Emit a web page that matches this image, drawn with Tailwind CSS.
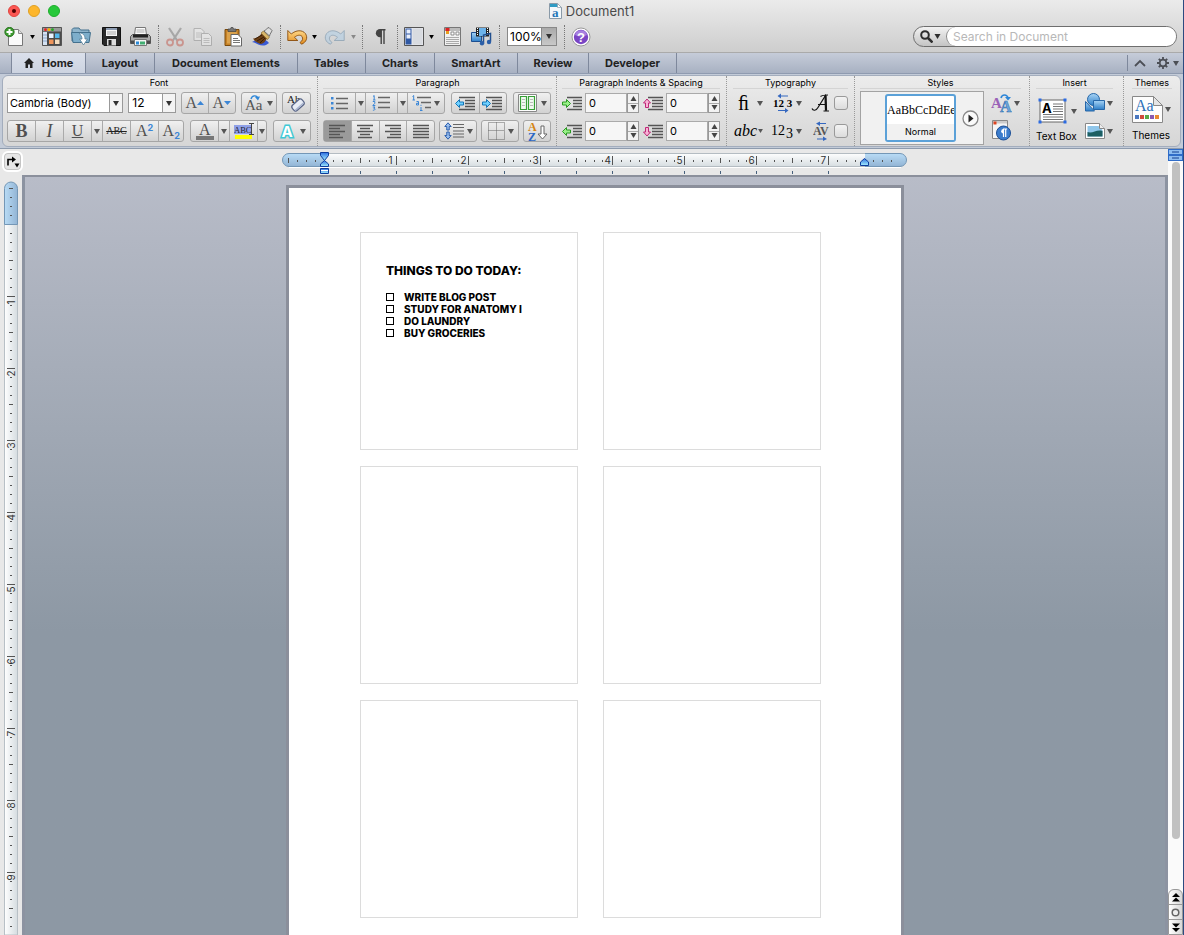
<!DOCTYPE html>
<html lang="en">
<head>
<meta charset="utf-8">
<title>Document1</title>
<script src="https://cdn.jsdelivr.net/npm/@tailwindcss/browser@4"></script>
</head>
<body class="flex h-screen flex-col overflow-hidden border-r border-[#2c4a80] bg-[#e8e8e8] font-[Inter,'Liberation_Sans',sans-serif] text-[11px] text-black">
<svg class="absolute size-0" aria-hidden="true">
  <symbol id="caret" viewBox="0 0 6 5"><path d="M0 0h6L3 5z"/></symbol>
  <linearGradient id="gold" x2="0" y2="1"><stop stop-color="#ffd98a"/><stop offset="1" stop-color="#e08a1c"/></linearGradient>
  <linearGradient id="blue" x2="0" y2="1"><stop stop-color="#a8d4f5"/><stop offset="1" stop-color="#2f7fc8"/></linearGradient>
</svg>

<header class="bg-linear-to-b from-[#ebebeb] to-[#cdcdcd]">
  <div class="relative flex h-[21px] items-center justify-center gap-1">
    <div class="absolute left-2 flex gap-2">
      <button aria-label="Close" class="flex size-3 items-center justify-center rounded-full border border-[#e0443e] bg-[#fc5753]"><span class="size-1 rounded-full bg-[#4d0000]"></span></button>
      <button aria-label="Minimize" class="size-3 rounded-full border border-[#dfa023] bg-[#fdb62c]"></button>
      <button aria-label="Zoom" class="size-3 rounded-full border border-[#1dad2b] bg-[#27c83a]"></button>
    </div>
    <svg width="13" height="16" viewBox="0 0 13 16"><path d="M.5.500h8l4 4v11H.5z" fill="#f4f8fb" stroke="#8a9aa8"/><path d="M1 1h7.500l3 3H1z" fill="#2f9bc4"/><path d="M8.500.5v4h4z" fill="#fff" stroke="#8a9aa8" stroke-width=".7"/><text x="3" y="13.500" font-family="Liberation Serif,serif" font-weight="bold" font-size="13" fill="#2476b8">a</text></svg>
    <h1 class="text-[13px] leading-5 text-[#4a4a4a]">Document1</h1>
  </div>

  <div class="flex h-8 items-center border-b border-[#aaa] pr-1.5 pl-0.5">
    <button aria-label="New" class="flex w-6 justify-center"><svg width="20" height="20" viewBox="0 0 20 20"><path d="M4.500 2.500h10l4 4v12h-14z" fill="#fafafa" stroke="#777"/><path d="M14.500 2.500v4h4" fill="#ddd" stroke="#888"/><circle cx="5.500" cy="5" r="4.700" fill="#3c9a2e" stroke="#1f6a16" stroke-width=".8"/><path d="M5.500 2v6M2.500 5h6" stroke="#fff" stroke-width="2"/></svg></button>
    <button aria-label="New options" class="flex w-3 justify-center"><svg width="5" height="4"><use href="#caret"/></svg></button>
    <button aria-label="Template gallery" class="flex w-7 justify-center"><svg width="20" height="19" viewBox="0 0 20 19"><path d="M.5.500h19v18H.5z" fill="#4a4a4a" stroke="#555"/><path d="M1 5h4v13H1z" fill="#d5e2f2"/><path d="M1 8h4M1 11h4M1 14h4" stroke="#8fa9cc"/><path d="M1 1h18v3.500H1z" fill="#999"/><circle cx="3.500" cy="2.700" r="1.400" fill="#e22"/><circle cx="7" cy="2.700" r="1.400" fill="#f4b400"/><circle cx="10.500" cy="2.700" r="1.400" fill="#2a2"/><path d="M7 6.500h4.500v4.500H7z" fill="#e9f3ff"/><path d="M13 6.500h4.500v4.500H13z" fill="#55b7ec"/><path d="M7 12.500h4.500V17H7z" fill="#f0955a"/><path d="M13 12.500h4.500V17H13z" fill="#f4ddc0"/></svg></button>
    <button aria-label="Open" class="flex w-7.5 justify-center"><svg width="20" height="19" viewBox="0 0 20 19"><path d="M1 14V2.500L2.500 1H8l1.500 2H18v11z" fill="#8fb4cb" stroke="#44718e"/><path d="M.5 5.500h19L18 15.500H2z" fill="#7eaecb" stroke="#44718e"/><path d="M8 6c4 0 6 2 6 6h2.500L12.500 18 8.500 12H11c0-2-1-4-3-6z" fill="#fff" stroke="#557d97" stroke-width=".8"/></svg></button>
    <button aria-label="Save" class="flex w-7.5 justify-center"><svg width="19" height="19" viewBox="0 0 19 19"><path d="M.5.500h18v18H2l-1.500-1.500z" fill="#292929" stroke="#111"/><path d="M4 1h11v8H4z" fill="#f6f6f6"/><path d="M4 1h11v2H4z" fill="#8d9cb2"/><path d="M5 5h9M5 7h9" stroke="#aaa"/><path d="M5 12h9v6.500H5z" fill="#ddd"/><path d="M6.500 13h3v5h-3z" fill="#222"/></svg></button>
    <button aria-label="Print" class="flex w-7 justify-center"><svg width="21" height="19" viewBox="0 0 21 19"><path d="M4.500 8l1-7.500h10l1 7.500z" fill="#fafafa" stroke="#777"/><path d="M6.500 3h8M6.500 5h8" stroke="#aaa"/><path d="M.5 9.500l2-2h16l2 2v7h-20z" fill="#aaa" stroke="#555"/><path d="M3 7.500h15v3H3z" fill="#222"/><path d="M1 13.500h19v3H1z" fill="#4b4b4b"/><path d="M4.500 12.500h12v6h-12z" fill="#f4f4f4" stroke="#777"/><path d="M6 14.500h3v3H6z" fill="#2b8bd8"/><path d="M10 14.500h5v3h-5z" fill="#41ae72"/></svg></button>
    <span class="flex w-2 justify-center"><i class="h-6 border-l border-dotted border-[#777]"></i></span>
    <button aria-label="Cut" class="flex w-6.5 justify-center opacity-50"><svg width="18" height="20" viewBox="0 0 18 20"><path d="M3 1l8.500 13M15 1L6.500 14" stroke="#777" stroke-width="2.200"/><circle cx="4" cy="15.500" r="3" fill="none" stroke="#c2584c" stroke-width="1.800"/><circle cx="14" cy="15.500" r="3" fill="none" stroke="#c2584c" stroke-width="1.800"/></svg></button>
    <button aria-label="Copy" class="flex w-7.5 justify-center opacity-40"><svg width="20" height="20" viewBox="0 0 20 20"><path d="M1 1.500h7l3 3v9H1z" fill="#f3f3f3" stroke="#777"/><path d="M3 6h6M3 8h6M3 10h6" stroke="#999"/><path d="M8.500 6.500h7l3 3v9h-10z" fill="#f5f5f5" stroke="#777"/><path d="M10.500 11.500h6M10.500 13.500h6M10.500 15.500h6" stroke="#999"/></svg></button>
    <button aria-label="Paste" class="flex w-7.5 justify-center"><svg width="19" height="20" viewBox="0 0 19 20"><path d="M1 2.500h14v16H1z" fill="#c78226" stroke="#7a4a0d"/><path d="M3 4.500h10v12H3z" fill="#dba24c"/><path d="M4 4.500V2h2.500l.5-1.500h2L9.500 2H12v2.500z" fill="#777" stroke="#444" stroke-width=".7"/><path d="M7 7.500h7l3.500 3.500v8H7z" fill="#fff" stroke="#666"/><path d="M9 11.500h5M9 13.500h7M9 15.500h7" stroke="#777"/></svg></button>
    <button aria-label="Format painter" class="flex w-7 justify-center"><svg width="22" height="20" viewBox="0 0 22 20"><path d="M1 15c5 1 8 5 14 3l3-2c-2-3-5-3-7-6z" fill="#3a5bd6"/><path d="M2 11.500C6 12 9 8 11 6.500l5 5c-2 3-3 5-6 5.500-3-1-6-2-8-5.500z" fill="#6b3e14"/><path d="M4 12l7-4M6 14l7-4M9 16l5-5" stroke="#3a1e06"/><path d="M10 6l2.500-2 6 6-2 2.500z" fill="#d9b66a" stroke="#7c5a1c" stroke-width=".6"/><path d="M13 4c2-1 3-3 5-3.500l3 3c-.5 2-2 3-2.500 5.500z" fill="#ddd" stroke="#555" stroke-width=".8"/></svg></button>
    <span class="flex w-2 justify-center"><i class="h-6 border-l border-dotted border-[#777]"></i></span>
    <button aria-label="Undo" class="flex w-6.5 justify-center"><svg width="21" height="16" viewBox="0 0 21 16"><path d="M.8 1.500v10h10L7.500 8.300c2.500-2.300 6-2.800 7.500-.8 1.300 2 .5 4.500-2 6l1.500 1.700c5-2 6.500-6.500 4-10.500-3.200-4.200-9.500-3.700-14.200.3z" fill="url(#gold)" stroke="#8a4d0c" stroke-width=".9"/></svg></button>
    <button aria-label="Undo options" class="flex w-2 justify-center"><svg width="5" height="4"><use href="#caret"/></svg></button>
    <button aria-label="Redo" class="flex w-8 justify-center opacity-45"><svg width="21" height="16" viewBox="0 0 21 16"><path d="M20.200 1.500v10h-10l3.300-3.200C11 6 7.500 5.500 6 7.500c-1.300 2-.5 4.500 2 6l-1.500 1.700c-5-2-6.500-6.500-4-10.500C5.700.5 12 1 16.700 5z" fill="#a8cdea" stroke="#4a7294" stroke-width=".9"/></svg></button>
    <button aria-label="Redo options" class="flex w-1.5 justify-center"><svg width="5" height="4" fill="#888"><use href="#caret"/></svg></button>
    <span class="flex w-3 justify-center"><i class="h-6 border-l border-dotted border-[#777]"></i></span>
    <button aria-label="Show formatting" class="flex w-6 justify-center"><svg width="11" height="15" viewBox="0 0 11 15"><path d="M10.500.8H5M6.200.5V15M9 .5V15" stroke="#444" stroke-width="1.400"/><path d="M6.500 0H5a4 4 0 000 8.300h1.500z" fill="#444"/></svg></button>
    <span class="flex w-2.5 justify-center"><i class="h-6 border-l border-dotted border-[#777]"></i></span>
    <button aria-label="Sidebar" class="flex w-6 justify-center"><svg width="20" height="19" viewBox="0 0 20 19"><path d="M.5.500h19v18H.5z" fill="#e9ebef" stroke="#555"/><path d="M1.500 1.500h6v16h-6z" fill="#3059a4"/><path d="M2.500 2.500h4v4h-4zM2.500 7.500h4v4h-4z" fill="#e7eefb"/><path d="M8.500 1.500h10v16h-10z" fill="#d8dbe0"/></svg></button>
    <button aria-label="Sidebar options" class="flex w-2.5 justify-center"><svg width="5" height="4"><use href="#caret"/></svg></button>
    <button aria-label="Toolbox" class="flex w-8 justify-center"><svg width="17" height="19" viewBox="0 0 17 19"><path d="M.5.500h16v18H.5z" fill="#f1f1f1" stroke="#777"/><path d="M1 1h15v3H1z" fill="#bbb"/><path d="M1.500 1h4v3h-4z" fill="#d22"/><path d="M2 4h3v3H2z" fill="#e8a020"/><path d="M7 5h3v3H7zM12 5h3v3h-3z" fill="#fff" stroke="#777" stroke-width=".8"/><path d="M2 10.500h13M2 12.500h13M2 14.500h13M2 16.500h13" stroke="#aaa"/></svg></button>
    <button aria-label="Media browser" class="flex w-6.5 justify-center"><svg width="21" height="19" viewBox="0 0 21 19"><path d="M.5 5.500h10v9H.5z" fill="url(#blue)" stroke="#1d4f91"/><path d="M5 .5h13v9H5z" fill="#222"/><path d="M8 1h7v8H8z" fill="#6db3ea"/><path d="M6.500 1v8M16.500 1v8" stroke="#fff" stroke-dasharray="1 1"/><path d="M12.500 16V8l7-1.500v8" fill="none" stroke="#224f8e" stroke-width="1.500"/><circle cx="11" cy="16.200" r="2.200" fill="#2a5ea8"/><circle cx="18" cy="15" r="2.200" fill="#2a5ea8"/></svg></button>
    <span class="flex w-2.5 justify-center"><i class="h-6 border-l border-dotted border-[#777]"></i></span>
    <div class="relative mx-[3px] h-[19px] w-[50px]">
      <select aria-label="Zoom level" class="h-full w-full appearance-none border border-[#888] bg-white pl-0.5 text-xs leading-none"><option>100%</option></select>
      <span class="pointer-events-none absolute inset-y-0 right-0 flex w-4 items-center justify-center border border-[#888] bg-linear-to-b from-[#aaa] to-[#c8c8c8]"><svg width="6" height="5" fill="#333"><use href="#caret"/></svg></span>
    </div>
    <span class="flex w-2 justify-center"><i class="h-6 border-l border-dotted border-[#777]"></i></span>
    <button aria-label="Help" class="ml-px flex w-6 justify-center"><svg width="20" height="20" viewBox="0 0 20 20"><circle cx="10" cy="10" r="9" fill="#fff" stroke="#999"/><circle cx="10" cy="10" r="7.200" fill="#7a45c4"/><path d="M4 8a6.200 6.200 0 0112 0c-4 2-8 2-12 0z" fill="#a880e0"/><text x="10" y="14.500" text-anchor="middle" font-family="Liberation Sans,sans-serif" font-weight="bold" font-size="13" fill="#fff">?</text></svg></button>
    <div class="ml-auto flex h-[21px] w-66 rounded-full border border-[#6e6e6e] bg-linear-to-b from-[#f2f2f2] to-[#c4c4c4]">
      <button aria-label="Search options" class="flex w-8 items-center justify-center gap-px"><svg width="13" height="13" viewBox="0 0 13 13" fill="none" stroke="#2d2d2d"><circle cx="5" cy="5" r="3.800" stroke-width="2"/><path d="M8 8l4.500 4.500" stroke-width="2.500"/></svg><svg width="7" height="5" fill="#2d2d2d"><use href="#caret"/></svg></button>
      <input aria-label="Search in Document" placeholder="Search in Document" class="min-w-0 flex-1 rounded-full border-l border-[#888] bg-white pl-1.5 text-xs outline-none placeholder:text-[#b8b8b8]">
    </div>
  </div>
</header>

<nav class="flex h-[21px] border-b border-[#8f9bb0] bg-linear-to-b from-[#c6ccd9] to-[#a8b1c2] pl-px text-[11px] font-bold text-[#222]">
  <span class="w-[11px] border-r border-[#7e889c]"></span>
  <button class="flex w-[74px] items-center justify-center gap-2 border-r border-[#7e889c] bg-linear-to-b from-[#dbe0eb] to-[#ccd3e0]"><svg width="10" height="10" viewBox="0 0 10 10"><path d="M5 0L0 5h1.500v5H4V6.500h2V10h2.500V5H10z" fill="#222"/></svg>Home</button>
  <button class="w-[69px] border-r border-[#7e889c]">Layout</button>
  <button class="w-[143px] border-r border-[#7e889c]">Document Elements</button>
  <button class="w-[68px] border-r border-[#7e889c]">Tables</button>
  <button class="w-[69px] border-r border-[#7e889c]">Charts</button>
  <button class="w-[83px] border-r border-[#7e889c]">SmartArt</button>
  <button class="w-[71px] border-r border-[#7e889c]">Review</button>
  <button class="w-[88px] border-r border-[#7e889c]">Developer</button>
  <div class="my-0.5 ml-auto flex items-center gap-2 border-l border-[#7e889c] pr-1 pl-1.5">
    <button aria-label="Collapse ribbon"><svg width="12" height="8" viewBox="0 0 12 8"><path d="M1 7l5-5 5 5" fill="none" stroke="#4c4f56" stroke-width="1.800"/></svg></button>
    <button aria-label="Ribbon settings" class="ml-0.5 flex items-center gap-[3px]"><svg width="14" height="14" viewBox="0 0 14 14" fill="none" stroke="#4c4f56"><circle cx="7" cy="7" r="3.300" stroke-width="1.700"/><path d="M7 1v2.500M7 10.500V13M1 7h2.500M10.500 7H13M2.800 2.800l1.700 1.700M9.500 9.500l1.700 1.700M2.800 11.200l1.700-1.700M9.500 4.500l1.700-1.700" stroke-width="1.800"/></svg><svg width="6" height="5" fill="#4c4f56"><use href="#caret"/></svg></button>
  </div>
</nav>

<section aria-label="Ribbon" class="border-b border-[#8e9bad] bg-[#c3cbd8] px-0.5 pt-px pb-px">
 <div class="grid h-18 grid-cols-[315px_239px_170px_128px_175px_94px_1fr] rounded-md border border-[#a3adbd] bg-linear-to-b from-[#ececec] to-[#d6d6d6]">
  <!-- Font -->
  <div class="border-r border-dotted border-[#999] pr-1.5 pl-1">
    <h2 class="mb-[3px] h-[13px] border-b border-[#d4d4d4] text-center text-[9px] leading-[13px]">Font</h2>
    <div class="flex flex-col gap-1.5">
      <div class="flex h-[22px] items-center gap-[5px]">
        <div class="relative h-5 w-[118px]">
          <select aria-label="Font name" class="h-full w-full appearance-none border border-[#999] bg-white pl-0.5 text-[11px]"><option>Cambria (Body)</option></select>
          <span class="pointer-events-none absolute inset-y-0 right-0 flex w-3.5 items-center justify-center border border-[#999] bg-[#f3f3f3]"><svg width="6" height="5" fill="#333"><use href="#caret"/></svg></span>
        </div>
        <div class="relative h-5 w-12">
          <select aria-label="Font size" class="h-full w-full appearance-none border border-[#999] bg-white pl-[3px] text-xs"><option>12</option></select>
          <span class="pointer-events-none absolute inset-y-0 right-0 flex w-3.5 items-center justify-center border border-[#999] bg-[#f3f3f3]"><svg width="6" height="5" fill="#333"><use href="#caret"/></svg></span>
        </div>
        <div class="flex h-[22px] w-14 divide-x divide-[#aaa] rounded-[3px] border border-[#a6a6a6] bg-linear-to-b from-[#f0f0f0] to-[#d2d2d2]">
          <button aria-label="Grow font" class="flex flex-1 items-center justify-center font-['Liberation_Serif',serif] text-base leading-none text-[#555]">A<svg width="7" height="4" viewBox="0 0 7 4"><path d="M0 4h7L3.500 0z" fill="#3b86d6"/></svg></button>
          <button aria-label="Shrink font" class="flex flex-1 items-center justify-center font-['Liberation_Serif',serif] text-base leading-none text-[#555]">A<svg width="7" height="4" viewBox="0 0 7 4"><path d="M0 0h7L3.500 4z" fill="#3b86d6"/></svg></button>
        </div>
        <button aria-label="Change case" class="flex h-[22px] w-[37px] items-center justify-center gap-1 rounded-[3px] border border-[#a6a6a6] bg-linear-to-b from-[#f0f0f0] to-[#d2d2d2]"><svg width="18" height="18" viewBox="0 0 18 18"><text x="0" y="16" font-family="Liberation Serif,serif" font-size="15" fill="#555">Aa</text><path d="M6 5c1-4 6-4 6.500-1" fill="none" stroke="#2d86d8" stroke-width="1.400"/><path d="M10 3l5-.5-2 4z" fill="#2d86d8"/></svg><svg width="6" height="5" fill="#555"><use href="#caret"/></svg></button>
        <button aria-label="Clear formatting" class="flex h-[22px] w-[29px] items-center justify-center rounded-[3px] border border-[#a6a6a6] bg-linear-to-b from-[#f0f0f0] to-[#d2d2d2]"><svg width="20" height="20" viewBox="0 0 20 20"><text x="0" y="10" font-family="Liberation Serif,serif" font-size="11" fill="#222">Ab</text><rect x="4.500" y="8.500" width="13" height="7" rx="2.500" transform="rotate(-42 11 12)" fill="#e8edf6" stroke="#5b6788" stroke-width="1.300"/><path d="M8 17.500l8.500-7.500" stroke="#aab5d0" stroke-width="1.500"/></svg></button>
      </div>
      <div class="flex h-[22px] font-['Liberation_Serif',serif] text-[#505050]">
        <div class="flex w-[178px] divide-x divide-[#aaa] rounded-[3px] border border-[#a6a6a6] bg-linear-to-b from-[#f0f0f0] to-[#d2d2d2]">
          <button aria-label="Bold" class="w-7 text-lg leading-5 font-bold">B</button>
          <button aria-label="Italic" class="w-7 text-lg leading-5 italic">I</button>
          <button aria-label="Underline" class="w-7 text-base leading-5 underline">U</button>
          <button aria-label="Underline options" class="flex w-[11px] items-center justify-center"><svg width="6" height="5" fill="#555"><use href="#caret"/></svg></button>
          <button aria-label="Strikethrough" class="w-7 text-[10px] leading-5 text-[#222] line-through">ABC</button>
          <button aria-label="Superscript" class="flex w-7 items-center justify-center text-base leading-5">A<span class="mb-2 font-[Inter,sans-serif] text-[9px] leading-none font-bold text-[#3b86d6]">2</span></button>
          <button aria-label="Subscript" class="flex flex-1 items-center justify-center text-base leading-5">A<span class="mt-2 font-[Inter,sans-serif] text-[9px] leading-none font-bold text-[#3b86d6]">2</span></button>
        </div>
        <div class="ml-1.5 flex w-[77px] divide-x divide-[#aaa] rounded-[3px] border border-[#a6a6a6] bg-linear-to-b from-[#f0f0f0] to-[#d2d2d2]">
          <button aria-label="Font color" class="flex w-7 flex-col items-center justify-center text-base leading-[13px]">A<span class="h-1 w-4.5 bg-[#777]"></span></button>
          <button aria-label="Font color options" class="flex w-[11px] items-center justify-center"><svg width="6" height="5" fill="#555"><use href="#caret"/></svg></button>
          <button aria-label="Highlight" class="flex w-7 flex-col items-center justify-center"><svg width="20" height="16" viewBox="0 0 20 16"><path d="M0 2h17v9H0z" fill="#8fa0e8"/><path d="M1 12h17v4H1z" fill="#ff0"/><text x="0" y="10" font-family="Liberation Serif,serif" font-size="8.500" fill="#223">ABC</text><path d="M15 .5h5M17.500.5v11M15 11.500h5" stroke="#444"/></svg></button>
          <button aria-label="Highlight options" class="flex flex-1 items-center justify-center"><svg width="6" height="5" fill="#555"><use href="#caret"/></svg></button>
        </div>
        <button aria-label="Text effects" class="ml-1.5 flex w-[38px] items-center justify-center gap-1 rounded-[3px] border border-[#a6a6a6] bg-linear-to-b from-[#f0f0f0] to-[#d2d2d2]"><svg width="18" height="19" viewBox="0 0 18 19"><text x="9" y="15" text-anchor="middle" font-family="Inter,sans-serif" font-weight="bold" font-size="15" fill="#fff" stroke="#3fc9d6" stroke-width="3" paint-order="stroke">A</text></svg><svg width="6" height="5" fill="#555"><use href="#caret"/></svg></button>
      </div>
    </div>
  </div>
  <!-- Paragraph -->
  <div class="border-r border-dotted border-[#999] pr-1 pl-[5px]">
    <h2 class="mb-[3px] h-[13px] border-b border-[#d4d4d4] text-center text-[9px] leading-[13px]">Paragraph</h2>
    <div class="flex flex-col gap-1.5">
      <div class="flex h-[22px] gap-1.5">
        <div class="flex w-[122px] divide-x divide-[#aaa] rounded-[3px] border border-[#a6a6a6] bg-linear-to-b from-[#f0f0f0] to-[#d2d2d2]">
          <button aria-label="Bullets" class="flex w-8 items-center justify-center"><svg width="19" height="15" viewBox="0 0 19 15"><path d="M1 1h2.500v2.500H1zM1 6h2.500v2.500H1zM1 11h2.500v2.500H1z" fill="#3b86d6"/><path d="M6 2.500h12M6 7.500h12M6 12.500h12" stroke="#666" stroke-width="1.300"/></svg></button>
          <button aria-label="Bullet options" class="flex w-2.5 items-center justify-center"><svg width="6" height="5" fill="#555"><use href="#caret"/></svg></button>
          <button aria-label="Numbering" class="flex w-8 items-center justify-center"><svg width="19" height="16" viewBox="0 0 19 16"><path d="M1 1.500l1.200-1V5M1 5h2.500M.8 6.500h2v1.800l-2 2.200h2.500M.8 12h2.200L1.800 13.300c2 .1 1.500 2.200-.9 1.900" fill="none" stroke="#3b86d6"/><path d="M6 2.500h12M6 7.500h12M6 12.500h12" stroke="#666" stroke-width="1.300"/></svg></button>
          <button aria-label="Numbering options" class="flex w-2.5 items-center justify-center"><svg width="6" height="5" fill="#555"><use href="#caret"/></svg></button>
          <button aria-label="Multilevel list" class="flex flex-1 items-center justify-center gap-0.5"><svg width="20" height="16" viewBox="0 0 20 16"><path d="M.5 1.500l1.200-1V5M.5 5h2.500M4.500 6.500h2v3.500h-2V8.300h2M9 12v3.500M8 15.500h2.500M8.500 10.300h1" fill="none" stroke="#3b86d6"/><path d="M5 2.500h14M9 7.500h10M13 12.500h6" stroke="#666" stroke-width="1.300"/></svg><svg width="6" height="5" fill="#555"><use href="#caret"/></svg></button>
        </div>
        <div class="flex w-14 divide-x divide-[#aaa] rounded-[3px] border border-[#a6a6a6] bg-linear-to-b from-[#f0f0f0] to-[#d2d2d2]">
          <button aria-label="Decrease indent" class="flex flex-1 items-center justify-center"><svg width="21" height="15" viewBox="0 0 21 15"><path d="M4 1.500h16M10 4.500h10M10 7.500h10M10 10.500h10M4 13.500h16" stroke="#555" stroke-width="1.300"/><path d="M.5 7.500l4-4v2.500h4v3h-4v2.500z" fill="#6fd0ff" stroke="#1376b8"/></svg></button>
          <button aria-label="Increase indent" class="flex flex-1 items-center justify-center"><svg width="21" height="15" viewBox="0 0 21 15"><path d="M4 1.500h16M10 4.500h10M10 7.500h10M10 10.500h10M4 13.500h16" stroke="#555" stroke-width="1.300"/><path d="M8.500 7.500l-4-4v2.500h-4v3h4v2.500z" fill="#6fd0ff" stroke="#1376b8"/></svg></button>
        </div>
        <button aria-label="Columns" class="flex w-[38px] items-center justify-center gap-1 rounded-[3px] border border-[#a6a6a6] bg-linear-to-b from-[#f0f0f0] to-[#d2d2d2]"><svg width="19" height="18" viewBox="0 0 19 18"><path d="M.5.500h18v17H.5z" fill="#fff" stroke="#888"/><path d="M2.500 2.500h6v13h-6zM10.500 2.500h6v13h-6z" fill="#f0faf0" stroke="#37a037" stroke-width="1.200"/><path d="M4 5.500h3M4 8.500h3M4 11.500h3M12 5.500h3M12 8.500h3M12 11.500h3" stroke="#bbb"/></svg><svg width="6" height="5" fill="#555"><use href="#caret"/></svg></button>
      </div>
      <div class="flex h-[22px] gap-1">
        <div class="flex w-28 divide-x divide-[#aaa] rounded-[3px] border border-[#a6a6a6] bg-linear-to-b from-[#f0f0f0] to-[#d2d2d2]">
          <button aria-label="Align left" aria-pressed="true" class="flex flex-1 items-center justify-center bg-[#9a9a9a]"><svg width="16" height="15" viewBox="0 0 16 15"><path d="M0 1.500h16M0 4.500h11M0 7.500h16M0 10.500h11M0 13.500h14" stroke="#555" stroke-width="1.300"/></svg></button>
          <button aria-label="Align center" class="flex flex-1 items-center justify-center"><svg width="16" height="15" viewBox="0 0 16 15"><path d="M0 1.500h16M3 4.500h10M0 7.500h16M3 10.500h10M1 13.500h14" stroke="#555" stroke-width="1.300"/></svg></button>
          <button aria-label="Align right" class="flex flex-1 items-center justify-center"><svg width="16" height="15" viewBox="0 0 16 15"><path d="M0 1.500h16M5 4.500h11M0 7.500h16M5 10.500h11M2 13.500h14" stroke="#555" stroke-width="1.300"/></svg></button>
          <button aria-label="Justify" class="flex flex-1 items-center justify-center"><svg width="16" height="15" viewBox="0 0 16 15"><path d="M0 1.500h16M0 4.500h16M0 7.500h16M0 10.500h16M0 13.500h16" stroke="#555" stroke-width="1.300"/></svg></button>
        </div>
        <button aria-label="Line spacing" class="flex w-[38px] items-center justify-center gap-0.5 rounded-[3px] border border-[#a6a6a6] bg-linear-to-b from-[#f0f0f0] to-[#d2d2d2]"><svg width="21" height="18" viewBox="0 0 21 18"><path d="M4 .8L.8 4.500h2V8h2.400V4.500h2zM4 17.200L.8 13.500h2V10h2.400v3.500h2z" fill="#9cc0ee" stroke="#2a5eae"/><path d="M9 2.500h11M9 5.500h11M9 9h11M9 12h11M9 15h11" stroke="#666" stroke-width="1.200"/></svg><svg width="6" height="5" fill="#555"><use href="#caret"/></svg></button>
        <button aria-label="Borders" class="flex w-[38px] items-center justify-center gap-0.5 rounded-[3px] border border-[#a6a6a6] bg-linear-to-b from-[#f0f0f0] to-[#d2d2d2]"><svg width="19" height="18" viewBox="0 0 19 18"><path d="M1.500.5h16v17h-16zM9.500.5v17M1.500 8.500h16" fill="none" stroke="#666" stroke-dasharray="1 1"/></svg><svg width="6" height="5" fill="#555"><use href="#caret"/></svg></button>
        <button aria-label="Sort" class="flex w-7 items-center justify-center rounded-[3px] border border-[#a6a6a6] bg-linear-to-b from-[#f0f0f0] to-[#d2d2d2]"><svg width="21" height="19" viewBox="0 0 21 19"><g font-family="Liberation Serif,serif" font-weight="bold" font-size="12"><text x="1" y="9" fill="#d58512">A</text><text x="1" y="18.500" fill="#2c66c4">Z</text></g><path d="M14 4h3v8h3l-4.500 5-4.500-5h3z" fill="#fff" stroke="#666"/></svg></button>
      </div>
    </div>
  </div>
  <!-- Indents and spacing -->
  <div class="border-r border-dotted border-[#999] pr-1.5 pl-[5px]">
    <h2 class="mb-[3px] h-[13px] border-b border-[#d4d4d4] text-center text-[9px] leading-[13px] whitespace-nowrap">Paragraph Indents &amp; Spacing</h2>
    <div class="grid grid-cols-2 gap-x-1 gap-y-1.5">
      <label class="flex h-[22px] items-center gap-0.5"><svg role="img" aria-label="Indent left" width="21" height="15" viewBox="0 0 21 15"><path d="M5 1.500h15M11 4.500h9M11 7.500h9M11 10.500h9M5 13.500h15" stroke="#555" stroke-width="1.300"/><path d="M8.500 7.500l-4-4v2.500h-4v3h4v2.500z" fill="#9bf08a" stroke="#2a9a22"/></svg><input value="0" class="h-5 w-0 min-w-0 flex-1 border border-[#aaa] bg-[#f6f6f6] pl-[3px] text-[11px]"><span class="-ml-0.5 flex h-5 w-3 flex-col items-center justify-evenly border border-[#999] bg-[#f2f2f2]"><svg width="7" height="5" viewBox="0 0 6 5"><path d="M0 5h6L3 0z" fill="#444"/></svg><i class="h-px w-full bg-[#aaa]"></i><svg width="7" height="5" fill="#444"><use href="#caret"/></svg></span></label>
      <label class="flex h-[22px] items-center gap-0.5"><svg role="img" aria-label="Space before" width="21" height="15" viewBox="0 0 21 15"><path d="M5 1.500h15M9 4.500h11M9 7.500h11M9 10.500h11M5 13.500h15" stroke="#555" stroke-width="1.300"/><path d="M4 3L.5 7h2v4.500h3V7h2z" fill="#f7b4d6" stroke="#c02878"/></svg><input value="0" class="h-5 w-0 min-w-0 flex-1 border border-[#aaa] bg-[#f6f6f6] pl-[3px] text-[11px]"><span class="-ml-0.5 flex h-5 w-3 flex-col items-center justify-evenly border border-[#999] bg-[#f2f2f2]"><svg width="7" height="5" viewBox="0 0 6 5"><path d="M0 5h6L3 0z" fill="#444"/></svg><i class="h-px w-full bg-[#aaa]"></i><svg width="7" height="5" fill="#444"><use href="#caret"/></svg></span></label>
      <label class="flex h-[22px] items-center gap-0.5"><svg role="img" aria-label="Indent right" width="21" height="15" viewBox="0 0 21 15"><path d="M5 1.500h15M11 4.500h9M11 7.500h9M11 10.500h9M5 13.500h15" stroke="#555" stroke-width="1.300"/><path d="M.5 7.500l4-4v2.500h4v3h-4v2.500z" fill="#9bf08a" stroke="#2a9a22"/></svg><input value="0" class="h-5 w-0 min-w-0 flex-1 border border-[#aaa] bg-[#f6f6f6] pl-[3px] text-[11px]"><span class="-ml-0.5 flex h-5 w-3 flex-col items-center justify-evenly border border-[#999] bg-[#f2f2f2]"><svg width="7" height="5" viewBox="0 0 6 5"><path d="M0 5h6L3 0z" fill="#444"/></svg><i class="h-px w-full bg-[#aaa]"></i><svg width="7" height="5" fill="#444"><use href="#caret"/></svg></span></label>
      <label class="flex h-[22px] items-center gap-0.5"><svg role="img" aria-label="Space after" width="21" height="15" viewBox="0 0 21 15"><path d="M5 1.500h15M9 4.500h11M9 7.500h11M9 10.500h11M5 13.500h15" stroke="#555" stroke-width="1.300"/><path d="M4 12L.5 8h2V3.500h3V8h2z" fill="#f7b4d6" stroke="#c02878"/></svg><input value="0" class="h-5 w-0 min-w-0 flex-1 border border-[#aaa] bg-[#f6f6f6] pl-[3px] text-[11px]"><span class="-ml-0.5 flex h-5 w-3 flex-col items-center justify-evenly border border-[#999] bg-[#f2f2f2]"><svg width="7" height="5" viewBox="0 0 6 5"><path d="M0 5h6L3 0z" fill="#444"/></svg><i class="h-px w-full bg-[#aaa]"></i><svg width="7" height="5" fill="#444"><use href="#caret"/></svg></span></label>
    </div>
  </div>
  <!-- Typography -->
  <div class="border-r border-dotted border-[#999] pr-1.5 pl-1.5">
    <h2 class="mb-[3px] h-[13px] border-b border-[#d4d4d4] text-center text-[9px] leading-[13px]">Typography</h2>
    <div class="grid grid-cols-[30px_39px_32px_14px] items-center gap-y-1.5 font-['Liberation_Serif',serif]">
      <button aria-label="Ligatures" class="flex h-[22px] items-center justify-end gap-2 text-xl leading-none">ﬁ<svg width="6" height="5" fill="#555"><use href="#caret"/></svg></button>
      <button aria-label="Number spacing" class="flex h-[22px] items-center justify-end gap-0.5"><svg width="21" height="20" viewBox="0 0 21 20"><text x="0" y="14" font-family="Liberation Serif,serif" font-size="11" font-weight="bold">12 3</text><path d="M6 3h9M5 17.500h9" stroke="#3568c0" stroke-width="1.200"/><path d="M8 .5L4.500 3 8 5.500zM12 15l3.500 2.500L12 20z" fill="#3568c0"/></svg><svg width="6" height="5" fill="#555"><use href="#caret"/></svg></button>
      <label for="ctxalt" class="flex justify-end pr-1"><svg role="img" aria-label="Contextual alternates" width="19" height="18" viewBox="0 0 19 18" fill="none" stroke="#111"><path d="M1 14.500c1 2.500 4 2.500 6-1L14.500 1.500 15 17" stroke-width="1.200"/><path d="M14.500 1.500L15 16.500" stroke-width="2.200"/><path d="M9.500 2.500c2-1.500 5-1.500 7.500-1.500M7 10.500h8M12.500 17h5.500" stroke-width="1.200"/></svg></label>
      <input id="ctxalt" type="checkbox" class="size-3.5 appearance-none rounded-[3px] border border-[#999] bg-linear-to-b from-[#f3f3f3] to-[#dcdcdc]">
      <button aria-label="Stylistic sets" class="flex h-[22px] items-center justify-end gap-px text-base leading-none italic">abc<svg width="5" height="4" fill="#555"><use href="#caret"/></svg></button>
      <button aria-label="Number forms" class="flex h-[22px] items-center justify-end gap-0.5"><svg width="24" height="18" viewBox="0 0 24 18"><g font-family="Liberation Serif,serif" font-size="14"><text x="1" y="13">12</text><text x="16" y="15.500">3</text></g></svg><svg width="6" height="5" fill="#555"><use href="#caret"/></svg></button>
      <label for="kern" class="flex justify-end pr-1"><svg role="img" aria-label="Kerning" width="17" height="20" viewBox="0 0 17 20"><text x="0" y="14" font-family="Liberation Serif,serif" font-weight="bold" font-size="12" fill="#555">AV</text><path d="M5 2.500h8M4 18h8" stroke="#3568c0" stroke-width="1.200"/><path d="M7 .5L3 2.500 7 5zM10 15.500l4 2.500-4 2z" fill="#3568c0"/></svg></label>
      <input id="kern" type="checkbox" class="size-3.5 appearance-none rounded-[3px] border border-[#999] bg-linear-to-b from-[#f3f3f3] to-[#dcdcdc]">
    </div>
  </div>
  <!-- Styles -->
  <div class="border-r border-dotted border-[#999] pr-2 pl-[5px]">
    <h2 class="mb-0.5 h-[13px] border-b border-[#d4d4d4] text-center text-[9px] leading-[13px]">Styles</h2>
    <div class="flex gap-1.5">
      <div class="flex h-[54px] w-[124px] items-center gap-1 border border-[#a3a3a3] bg-[#f1f1f1] pl-6">
        <button class="flex h-12 w-[71px] flex-col overflow-hidden rounded-[3px] border-2 border-[#5ba1d8] bg-white"><span class="flex w-full flex-1 items-center overflow-hidden font-['Liberation_Serif',serif] text-xs whitespace-nowrap">AaBbCcDdEe</span><span class="w-full bg-[#f1f1f1] text-center text-[9px] leading-4">Normal</span></button>
        <button aria-label="More styles" class="ml-0.5"><svg width="17" height="17" viewBox="0 0 17 17"><circle cx="8.500" cy="8.500" r="7.500" fill="#fafafa" stroke="#888" stroke-width="1.300"/><path d="M6.500 4.500l5 4-5 4z" fill="#222"/></svg></button>
      </div>
      <div class="flex flex-col gap-1.5 pt-0.5 pl-px">
        <button aria-label="Change styles" class="flex items-center gap-0.5"><svg width="21" height="21" viewBox="0 0 21 21"><g font-family="Liberation Serif,serif" font-weight="bold"><text x="0" y="15" font-size="15" fill="#9a63b8">A</text><text x="9" y="19" font-size="16" fill="#6fa8dc" stroke="#2c6cae" stroke-width=".5">A</text></g><path d="M10 5c1-4 6-4 7 0" fill="none" stroke="#2d86d8" stroke-width="1.600"/><path d="M14 4h6L17 7.500z" fill="#2d86d8"/></svg><svg width="6" height="5" fill="#555"><use href="#caret"/></svg></button>
        <button aria-label="Manage styles"><svg width="20" height="21" viewBox="0 0 20 21"><path d="M1.500.5h15v18h-15z" fill="#f5f5f5" stroke="#888"/><path d="M2 1h14v2.500H2z" fill="#ccc"/><path d="M2.500 1.500h3v3h-3z" fill="#d42"/><circle cx="12.500" cy="13" r="7" fill="#3b7ccc" stroke="#1c4f96"/><path d="M12.500 9a2.300 2.300 0 000 4.600z" fill="#fff"/><path d="M16 9h-4M12.500 9v8M14.700 9v8" stroke="#fff" stroke-width="1.200" fill="none"/></svg></button>
      </div>
    </div>
  </div>
  <!-- Insert -->
  <div class="border-r border-dotted border-[#999] pr-2.5 pl-1.5">
    <h2 class="mb-[3px] h-[13px] border-b border-[#d4d4d4] text-center text-[9px] leading-[13px]">Insert</h2>
    <div class="flex justify-between">
      <button class="flex flex-col pt-1.5 text-left text-[10px] leading-3 whitespace-nowrap"><span class="flex items-center gap-1 pb-1.5"><svg class="ml-0.5" width="29" height="26" viewBox="0 0 29 26"><path d="M2 2h25v22H2z" fill="#fff" stroke="#666"/><path d="M15 6h10M15 8.500h10M15 11h10M15 13.500h10M5 16.500h20M5 19h20M5 21.500h20" stroke="#777"/><text x="4" y="15" font-family="Inter,sans-serif" font-weight="bold" font-size="13">A</text><path d="M.5.500h3v3h-3zM25.500.5h3v3h-3zM.5 22.500h3v3h-3zM25.500 22.500h3v3h-3z" fill="#2b6be4"/></svg><svg width="6" height="5" fill="#555"><use href="#caret"/></svg></span>Text Box</button>
      <div class="flex flex-col gap-1.5">
        <button aria-label="Shapes" class="flex h-[22px] items-center gap-0.5"><svg width="20" height="20" viewBox="0 0 20 20" fill="url(#blue)" stroke="#2767a8"><path d="M.5 8.500V18h9z"/><circle cx="8.500" cy="6.500" r="6"/><path d="M8.500 7.500h11v9h-11z"/></svg><svg width="6" height="5" fill="#555"><use href="#caret"/></svg></button>
        <button aria-label="Picture" class="flex h-[22px] items-center gap-0.5"><svg width="20" height="16" viewBox="0 0 20 16"><path d="M.5.500h14l5 5v10H.5z" fill="#fff" stroke="#888"/><path d="M2.500 3h11l4 4v6.500h-15z" fill="#8fc6ea"/><path d="M2.500 9c5 2 9-3 15-1v5.500h-15z" fill="#1d5f63"/><path d="M14.500.5v5h5" fill="#eee" stroke="#888"/></svg><svg width="6" height="5" fill="#555"><use href="#caret"/></svg></button>
      </div>
    </div>
  </div>
  <!-- Themes -->
  <div class="pr-2 pl-2">
    <h2 class="mb-[3px] h-[13px] border-b border-[#d4d4d4] text-center text-[9px] leading-[13px]">Themes</h2>
    <button class="flex flex-col pt-1 text-left text-[10px] leading-3"><span class="flex items-center gap-0.5 pb-1.5"><svg width="31" height="27" viewBox="0 0 31 27"><path d="M.5.500h21l9 9v17H.5z" fill="#fdfdfd" stroke="#888"/><path d="M21.500.5v9h9z" fill="#e5e5e5" stroke="#888"/><text x="3" y="15" font-family="Liberation Serif,serif" font-size="16" fill="#2d70b8">Aa</text><path d="M3 19h4v4H3z" fill="#4a78c0"/><path d="M8 19h4v4H8z" fill="#d04a3c"/><path d="M13 19h4v4h-4z" fill="#58a846"/><path d="M18 19h4v4h-4z" fill="#8a5ab0"/><path d="M23 19h4v4h-4z" fill="#e88a30"/></svg><svg width="6" height="5" fill="#555"><use href="#caret"/></svg></span>Themes</button>
  </div>
 </div>
</section>

<main class="flex min-h-0 flex-1">
  <div class="flex min-w-0 flex-1 flex-col">
    <div class="flex h-[26px] shrink-0 pl-0.5">
      <button aria-label="Tab type" class="mt-0.5 size-[21px] rounded-md border-2 border-white bg-[#e6e6e6] shadow-[inset_0_0_0_1px_#c4c4c4]"><svg width="17" height="17" viewBox="0 0 17 17"><path d="M4 12.500V6.500h5" fill="none" stroke="#000" stroke-width="1.600"/><path d="M8 3.500l4 3-4 3z"/><path d="M10.500 10.500h5l-2.500 4z"/></svg></button>
      <svg id="hruler" role="img" aria-label="Horizontal ruler" class="mx-auto" width="628" height="26" viewBox="282 149 628 26">
        <defs>
          <linearGradient id="rw" x2="0" y2="1"><stop stop-color="#fff"/><stop offset="1" stop-color="#d5dce0"/></linearGradient>
          <linearGradient id="rb" x2="0" y2="1"><stop stop-color="#b9dcf6"/><stop offset="1" stop-color="#92b4d4"/></linearGradient>
          <linearGradient id="mk" x2="0" y2="1"><stop stop-color="#2f6fe0"/><stop offset="1" stop-color="#a4f0ff"/></linearGradient>
        </defs>
        <rect x="282.500" y="153.500" width="624" height="13" rx="6.500" fill="url(#rb)" stroke="#7497b6"/>
        <path d="M324 153h541v14H324z" fill="url(#rw)"/><path d="M324 153.500h541M324 166.500h541" stroke="#b4bcc2"/><path d="M289 167.500h612" stroke="#fff"/>
        <g id="hticks"></g>
        <g fill="url(#mk)" stroke="#0e3c9c"><path d="M320.500 152.500h8v3l-4 5-4-5z"/><path d="M324.500 160.500l4 3.500v2.500h-8V164z"/><path d="M320.500 168.500h8v5h-8z"/><path d="M864.500 158.500l4 3.500v3.500h-8V162z"/></g>
        <path d="M321 170.500h7" stroke="#fff"/>
      </svg>
    </div>
    <div class="flex min-h-0 flex-1">
      <svg id="vruler" role="img" aria-label="Vertical ruler" class="w-[22px] shrink-0" width="22" height="760" viewBox="0 175 22 760">
        <defs><linearGradient id="vw"><stop stop-color="#fff"/><stop offset="1" stop-color="#d5dce0"/></linearGradient><linearGradient id="vb"><stop stop-color="#b9dcf6"/><stop offset="1" stop-color="#92b4d4"/></linearGradient></defs>
        <path d="M4.500 224v711h13V224z" fill="url(#vw)" stroke="#b8c0c6"/>
        <path d="M4.500 224.500v-36a6.500 6.500 0 0113 0v36z" fill="url(#vb)" stroke="#7497b6"/>
        <g id="vticks"></g>
      </svg>
      <div class="flex min-w-0 flex-1 items-start justify-center overflow-hidden border-x-3 border-t-2 border-x-[#8c93a1] border-t-[#8b909c] bg-linear-to-b from-[#b8bcc8] to-[#8d98a4] to-60% pt-[11px]">
        <article class="h-[792px] w-[612px] shrink-0 bg-white pt-11 pr-20 pl-[71px] shadow-[0_0_0_3px_#8b8f9b]">
          <div class="grid grid-cols-2 gap-x-[25px] gap-y-4">
            <div class="h-[218px] border border-[#dcdcdc] px-[25px] pt-7.5">
              <h2 class="text-[12px] leading-4 font-extrabold whitespace-nowrap">THINGS TO DO TODAY:</h2>
              <ul class="mt-3 text-[10px] leading-3 font-extrabold whitespace-nowrap">
                <li><label class="flex items-center gap-2.5"><input type="checkbox" class="size-2 appearance-none border border-black">WRITE BLOG POST</label></li>
                <li><label class="flex items-center gap-2.5"><input type="checkbox" class="size-2 appearance-none border border-black">STUDY FOR ANATOMY I</label></li>
                <li><label class="flex items-center gap-2.5"><input type="checkbox" class="size-2 appearance-none border border-black">DO LAUNDRY</label></li>
                <li><label class="flex items-center gap-2.5"><input type="checkbox" class="size-2 appearance-none border border-black">BUY GROCERIES</label></li>
              </ul>
            </div>
            <div class="h-[218px] border border-[#dcdcdc]"></div>
            <div class="h-[218px] border border-[#dcdcdc]"></div>
            <div class="h-[218px] border border-[#dcdcdc]"></div>
            <div class="h-[218px] border border-[#dcdcdc]"></div>
            <div class="h-[218px] border border-[#dcdcdc]"></div>
          </div>
        </article>
      </div>
    </div>
  </div>
  <div class="flex w-[15px] flex-col items-center bg-[#fafafa]">
    <button aria-label="Split view" class="h-3 w-full bg-[#2f6cc8]"><svg width="15" height="12" viewBox="0 0 15 12"><path d="M1 1h13v4H1zM1 7h13v4H1z" fill="#8dbcf0"/><path d="M4 3h7M4 9h7" stroke="#143f8e"/></svg></button>
    <div class="mt-px mb-[50px] w-2 flex-1 rounded-full bg-[#c1c1c1]"></div>
    <div class="flex h-[46px] w-full flex-col divide-y divide-[#999] rounded-t-md border border-[#999] bg-linear-to-r from-white to-[#d8d8d8]">
      <button aria-label="Previous page" class="flex flex-1 items-center justify-center"><svg width="8" height="9" viewBox="0 0 8 9"><path d="M4 0l4 4H0zM4 4.500l4 4H0z"/></svg></button>
      <button aria-label="Browse object" class="flex flex-1 items-center justify-center"><svg width="9" height="9" viewBox="0 0 9 9"><circle cx="4.500" cy="4.500" r="3.300" fill="#eee" stroke="#666" stroke-width="1.500"/></svg></button>
      <button aria-label="Next page" class="flex flex-1 items-center justify-center"><svg width="8" height="9" viewBox="0 0 8 9"><path d="M4 4.500l4-4H0zM4 9l4-4H0z"/></svg></button>
    </div>
  </div>
</main>
<script>
const NS = 'http://www.w3.org/2000/svg';
const add = (parent, tag, attrs, text) => {
  const el = document.createElementNS(NS, tag);
  for (const k in attrs) el.setAttribute(k, attrs[k]);
  if (text) el.textContent = text;
  parent.appendChild(el);
};
const h = document.getElementById('hticks'), v = document.getElementById('vticks');
const font = { 'font-family': 'Inter,sans-serif', 'font-size': 10, fill: '#333' };
// One tick per eighth of an inch; 72px to the inch, origin at 324.
for (let i = -4; i <= 63; i++) {
  if (i === 0 || i === 60) continue;
  const x = 324 + i * 9 + 0.5;
  const inch = i > 0 && i % 8 === 0 && i < 60;
  const half = i % 4 === 0;
  if (i > 0 && i % 8 === 7 && i < 60) { add(h, 'text', { ...font, x: x + 1, y: 164 }, String((i + 1) / 8)); add(h, 'path', { d: `M${x - 1} 160v2`, stroke: '#555' }); continue; }
  add(h, 'path', { d: inch ? `M${x} 156v9` : half ? `M${x} 158v5` : `M${x} 160v2`, stroke: '#555' });
  if (i > 0 && half && i < 60) add(h, 'path', { d: `M${x} 171v3`, stroke: '#46607c' });
}
for (let i = -4; i <= 78; i++) {
  if (i === 0) continue;
  const y = 224 + i * 9 + 0.5;
  const inch = i > 0 && i % 8 === 0, half = i % 4 === 0;
  add(v, 'path', { d: inch ? `M7 ${y}h8` : half ? `M9 ${y}h4` : `M10 ${y}h2`, stroke: '#555' });
  if (inch) add(v, 'text', { ...font, transform: `translate(15 ${y + 8}) rotate(-90)` }, String(i / 8));
}
</script>
</body>
</html>
